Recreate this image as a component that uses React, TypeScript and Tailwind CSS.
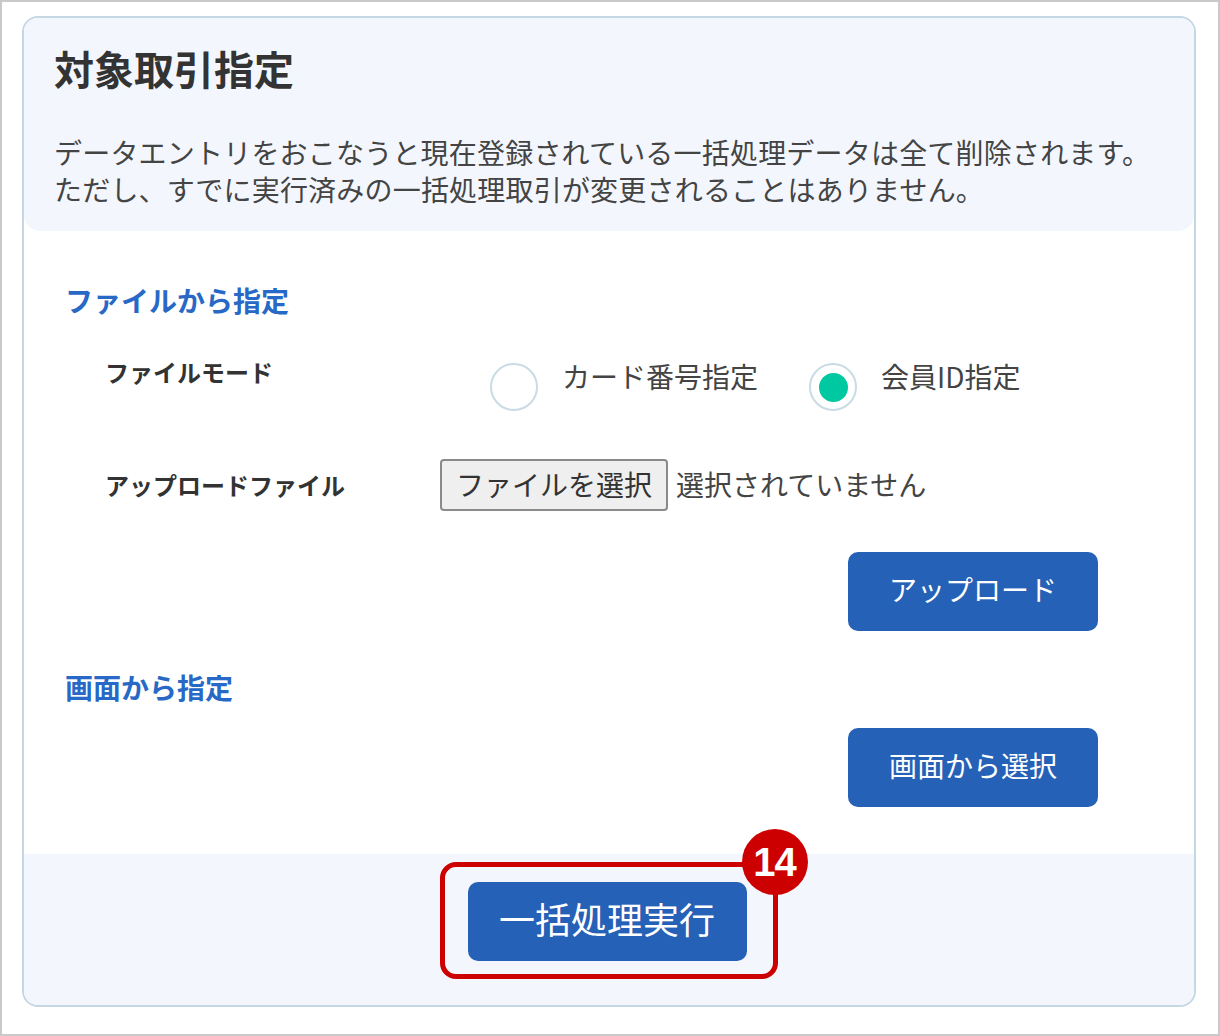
import React from 'react';

const jp = { fontFamily: '"Noto Sans CJK JP", "Noto Sans", sans-serif' };

function Radio({ label, checked }: { label: string; checked?: boolean }) {
    return (
        <label className="flex items-start gap-[24px]">
            <span className="mt-[7px] flex h-[48px] w-[48px] items-center justify-center rounded-full border-2 border-[#c9dbe4] bg-white">
                {checked && <span className="h-[29px] w-[29px] rounded-full bg-[#00c8a0]" />}
            </span>
            <span className="mt-[2px] text-[28px] leading-[36px] text-[#444]">{label}</span>
        </label>
    );
}

function BlueButton({ children }: { children: React.ReactNode }) {
    return (
        <button className="flex h-[79px] w-[250px] items-center justify-center rounded-[10px] bg-[#2561b6] pb-[5px] text-[28px] text-white">
            {children}
        </button>
    );
}

export default function App() {
    return (
        <div className="h-[1036px] w-[1220px] border-2 border-[#c9c9c9] bg-white" style={jp}>
            <div className="ml-[20px] mt-[14px] flex h-[991px] w-[1174px] flex-col overflow-hidden rounded-[16px] border-2 border-[#c5d7e3] bg-white">
                {/* header */}
                <div className="rounded-b-[16px] bg-[#f3f7fd] px-[30px] pb-[23px] pt-[26px]">
                    <h1 className="text-[40px] font-bold leading-[48px] text-[#333]">対象取引指定</h1>
                    <p className="mt-[42px] text-[28px] leading-[37px] tracking-[0.2px] text-[#444]">
                        データエントリをおこなうと現在登録されている一括処理データは全て削除されます。
                        <br />
                        ただし、すでに実行済みの一括処理取引が変更されることはありません。
                    </p>
                </div>

                {/* body */}
                <div className="flex-1 pl-[41px]">
                    <h2 className="mt-[51px] text-[28px] font-bold leading-[36px] text-[#2868c6]">ファイルから指定</h2>

                    <div className="mt-[38px] flex items-start pl-[40px]">
                        <div className="w-[335px] text-[24px] font-bold leading-[32px] text-[#333]">ファイルモード</div>
                        <div className="flex gap-[51px] pl-[50px]">
                            <Radio label="カード番号指定" />
                            <Radio label="会員ID指定" checked />
                        </div>
                    </div>

                    <div className="mt-[48px] flex items-center pl-[40px]">
                        <div className="w-[335px] text-[24px] font-bold leading-[32px] text-[#333]">アップロードファイル</div>
                        <div className="flex items-center gap-[8px]">
                            <button className="h-[52px] rounded-[4px] border-2 border-[#8a8a8a] bg-[#efefef] px-[14px] pb-[3px] text-[28px] leading-[36px] text-[#333]">
                                ファイルを選択
                            </button>
                            <span className="pb-[3px] text-[28px] leading-[36px] text-[#444]">選択されていません</span>
                        </div>
                    </div>

                    <div className="mt-[41px] flex justify-end pr-[96px]">
                        <BlueButton>アップロード</BlueButton>
                    </div>

                    <h2 className="mt-[38px] text-[28px] font-bold leading-[36px] text-[#2868c6]">画面から指定</h2>

                    <div className="mt-[23px] flex justify-end pr-[96px]">
                        <BlueButton>画面から選択</BlueButton>
                    </div>
                </div>

                {/* footer */}
                <div className="flex h-[151px] justify-center bg-[#f3f7fd] pr-[4px] pt-[28px]">
                    <div className="relative h-[79px]">
                        <button className="flex h-[79px] w-[279px] items-center justify-center rounded-[10px] bg-[#2561b6] pb-[7px] text-[36px] text-white">
                            一括処理実行
                        </button>
                        <div className="pointer-events-none absolute -bottom-[18px] -left-[28px] -right-[31px] -top-[20px] rounded-[16px] border-[5px] border-[#cc0000]" />
                        <div
                            className="absolute left-[274px] top-[-53px] flex h-[66px] w-[66px] items-center justify-center rounded-full bg-[#cc0000] text-[40px] font-bold tracking-[-1px] text-white"
                            style={{ fontFamily: '"Liberation Sans", Arial, sans-serif' }}
                        >
                            14
                        </div>
                    </div>
                </div>
            </div>
        </div>
    );
}
